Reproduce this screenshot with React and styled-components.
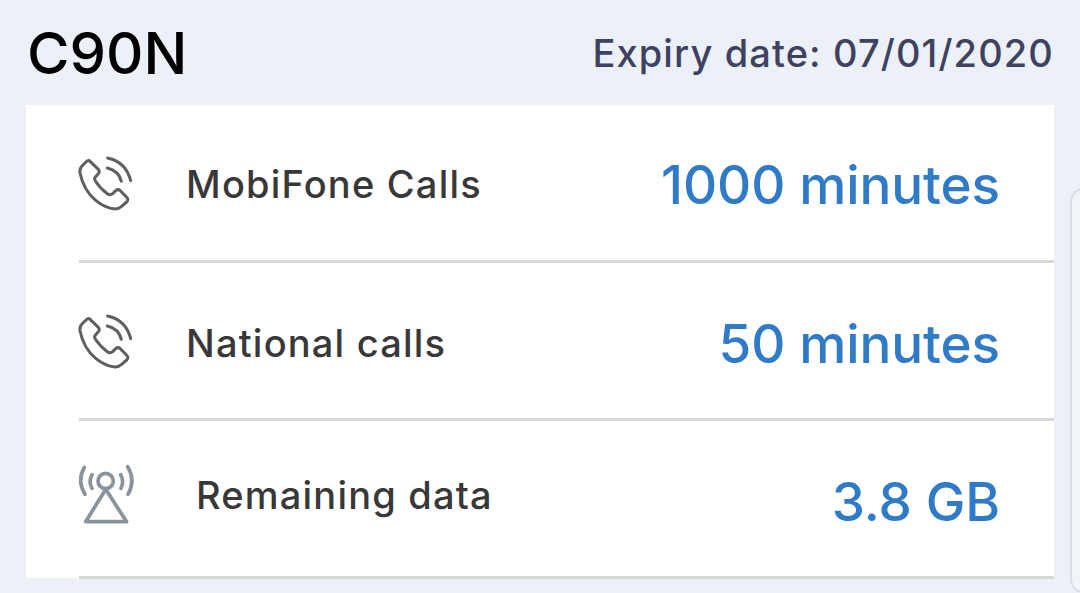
import React from 'react';
import styled, { createGlobalStyle } from 'styled-components';

const GlobalStyle = createGlobalStyle`
html, body {
  margin: 0;
  height: 100%;
  overflow: hidden;
  background-color: #ecf1f8;
}
`;

const Page = styled.div`
display: flex;
width: 1080px;
height: 593px;
padding-left: 26px;
box-sizing: border-box;
overflow: hidden;
font-family: Inter, "Liberation Sans", sans-serif;
`;

const Main = styled.div`
flex: 0 0 1028px;
`;

const Header = styled.div`
display: flex;
justify-content: space-between;
align-items: center;
height: 105px;
`;

const Title = styled.h1`
margin: 0 0 0 1px;
font-size: 58px;
font-weight: 450;
color: #000;
`;

const Expiry = styled.span`
font-size: 38px;
font-weight: 450;
color: #3e4260;
letter-spacing: 1.12px;
`;

const Card = styled.div`
background-color: #fff;
padding-left: 53px;
height: 473px;
`;

const Row = styled.div`
display: flex;
align-items: center;
box-sizing: border-box;
height: 158px;
padding-right: 54px;
border-bottom: 3px solid #d7d8da;
`;

const IconBox = styled.div`
flex: 0 0 ${(p) => p.$width}px;
display: flex;
margin-top: ${(p) => p.$top}px;
`;

const Label = styled.span`
margin-top: ${(p) => p.$top}px;
font-size: 38px;
font-weight: 450;
color: #383838;
letter-spacing: 1.2px;
`;

const Value = styled.span`
margin: ${(p) => p.$top}px 0 0 auto;
font-size: 53px;
font-weight: 450;
color: #2f7bc8;
letter-spacing: -0.1px;
`;

const SidePanel = styled.div`
flex: 0 0 100px;
margin: 188px 0 0 16px;
background-color: #f1f4f9;
border: 2px solid #d9dde4;
border-radius: 14px;
`;

const PhoneIcon = () => (
  <svg width="100" height="90" viewBox="0 0 300 270" style={{ margin: '0 -47px 0 -19px' }} fill="none" stroke="#5d6063" strokeWidth="9" strokeLinecap="round" strokeLinejoin="round">
    <path d="M88 62Q84 60 78 66L66 78Q58 86 60 98Q70 150 108 182Q135 204 165 207Q176 207 184 200L200 186Q207 178 200 172L181 152Q174 146 167 152L158 161Q150 167 143 162Q120 145 106 123Q101 116 107 110L116 100Q120 94 115 88Z" />
    <path d="M143 54Q198 66 212 122" />
    <path d="M142 84Q176 92 184 124" />
  </svg>
);

const TowerIcon = () => (
  <svg width="100" height="143" viewBox="0 0 300 429" style={{ margin: '-43px -47px -43px -19px', flex: 'none' }} fill="none" stroke="#8a929c" strokeWidth="11" strokeLinecap="round" strokeLinejoin="round">
    <circle cx="137" cy="93" r="23" />
    <path d="M137 118L77 215H200Z" />
    <path d="M73 52Q50 92 75 133" />
    <path d="M96 74Q85 95 96 115" />
    <path d="M182 74Q193 95 183 115" />
    <path d="M203 50Q228 92 204 133" />
  </svg>
);

const rows = [
  { label: 'MobiFone Calls', value: '1000 minutes', icon: <PhoneIcon />, width: 107, iconTop: 5, labelTop: 2, valueTop: 5 },
  { label: 'National calls', value: '50 minutes', icon: <PhoneIcon />, width: 107, iconTop: 5, labelTop: 4, valueTop: 7 },
  { label: 'Remaining data', value: '3.8 GB', icon: <TowerIcon />, width: 117, iconTop: 46, labelTop: -8, valueTop: 7 },
];

const App = () => {
  return (
    <>
      <GlobalStyle />
      <Page>
        <Main>
          <Header>
            <Title>C90N</Title>
            <Expiry>Expiry date: 07/01/2020</Expiry>
          </Header>
          <Card>
            {rows.map((row) => (
              <Row key={row.label}>
                <IconBox $width={row.width} $top={row.iconTop}>{row.icon}</IconBox>
                <Label $top={row.labelTop}>{row.label}</Label>
                <Value $top={row.valueTop}>{row.value}</Value>
              </Row>
            ))}
          </Card>
        </Main>
        <SidePanel />
      </Page>
    </>
  );
};

export default App;
